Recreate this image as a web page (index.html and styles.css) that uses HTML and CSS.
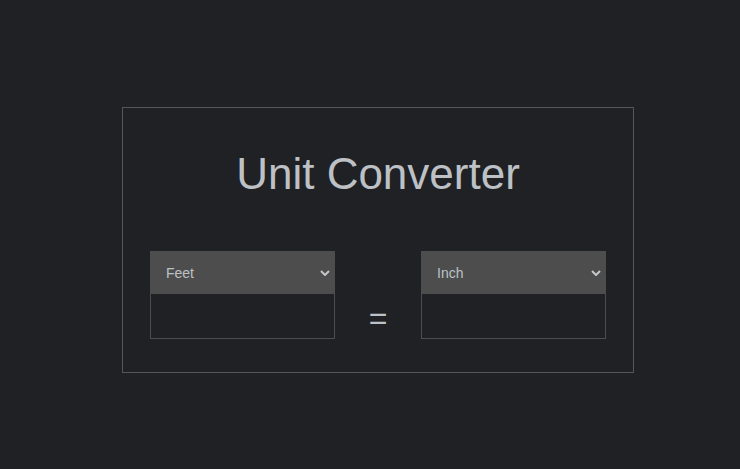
FILE: index.html
```html
<!DOCTYPE html>
<html>
<head>
<meta charset="utf-8">
<link rel="stylesheet" href="styles.css">
</head>
<body>
<div class="card">
  <h1 class="title">Unit Converter</h1>
  <div class="row">
    <div class="field">
      <div class="select-wrap">
        <select class="unit">
          <option>Feet</option>
          <option>Inch</option>
        </select>
        <svg class="chev" width="10" height="6" viewBox="0 0 10 6"><path d="M1 1 L5 5 L9 1" fill="none" stroke="#c4c7ca" stroke-width="2"/></svg>
      </div>
      <input class="value" type="text">
    </div>
    <div class="equals">=</div>
    <div class="field">
      <div class="select-wrap">
        <select class="unit">
          <option>Inch</option>
          <option>Feet</option>
        </select>
        <svg class="chev" width="10" height="6" viewBox="0 0 10 6"><path d="M1 1 L5 5 L9 1" fill="none" stroke="#c4c7ca" stroke-width="2"/></svg>
      </div>
      <input class="value" type="text">
    </div>
  </div>
</div>
</body>
</html>
```
FILE: styles.css
```css
html, body {
  margin: 0;
  padding: 0;
  background: #202124;
  font-family: "Liberation Sans", Arial, sans-serif;
  color: #bdc1c6;
}
.card {
  box-sizing: border-box;
  width: 512px;
  height: 266px;
  margin: 107px 0 0 122px;
  border: 1px solid #55565a;
  padding: 0 27px;
}
.title {
  margin: 0;
  padding-top: 38px;
  height: 105px;
  box-sizing: border-box;
  font-size: 44px;
  font-weight: normal;
  line-height: 56px;
  text-align: center;
  color: #bdc1c6;
}
.row {
  margin-top: 38px;
  display: flex;
  justify-content: space-between;
  align-items: center;
}
.field {
  width: 185px;
  display: flex;
  flex-direction: column;
}
.select-wrap {
  position: relative;
}
.unit {
  appearance: none;
  -webkit-appearance: none;
  display: block;
  width: 185px;
  height: 43px;
  margin: 0;
  border: none;
  outline: none;
  background: #4d4d4d;
  color: #bdc1c6;
  font-family: "Liberation Sans", Arial, sans-serif;
  font-size: 14px;
  padding: 0 16px;
}
.chev {
  position: absolute;
  right: 5px;
  top: 19px;
  pointer-events: none;
}
.value {
  display: block;
  box-sizing: border-box;
  width: 185px;
  height: 45px;
  margin: 0;
  border: 1px solid #4d4d4d;
  border-top: none;
  background: #202124;
  outline: none;
}
.equals {
  font-size: 32px;
  color: #bdc1c6;
  padding-top: 46px;
}
```
